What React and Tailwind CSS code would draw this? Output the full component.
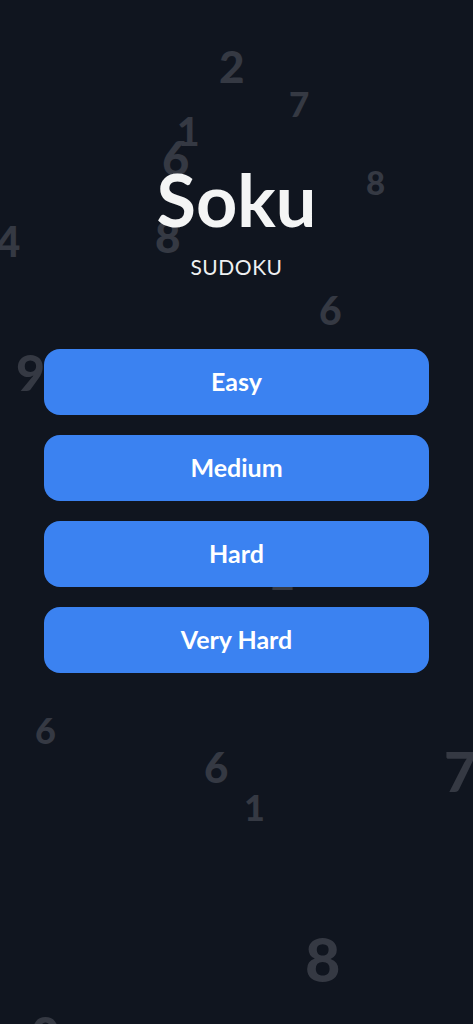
import React from 'react';

// scattered background digits (position is the content here)
const digits = [
  { n: '2', cls: 'left-[219px] top-[44px] text-[44px]' },
  { n: '7', cls: 'left-[289px] top-[86px] text-[35px]' },
  { n: '1', cls: 'left-[177px] top-[112px] text-[39px]' },
  { n: '6', cls: 'left-[162px] top-[135px] text-[47px]' },
  { n: '8', cls: 'left-[366px] top-[166px] text-[33px]' },
  { n: '4', cls: 'left-[-4px] top-[220px] text-[42px]' },
  { n: '8', cls: 'left-[155px] top-[214px] text-[44px]' },
  { n: '6', cls: 'left-[319px] top-[291px] text-[39px]' },
  { n: '9', cls: 'left-[16px] top-[347px] text-[50px]' },
  { n: '2', cls: 'left-[271px] top-[555px] text-[40px]' },
  { n: '6', cls: 'left-[35px] top-[712px] text-[36px]' },
  { n: '6', cls: 'left-[204px] top-[746px] text-[42px]' },
  { n: '1', cls: 'left-[244px] top-[789px] text-[36px]' },
  { n: '7', cls: 'left-[444px] top-[743px] text-[56px]' },
  { n: '8', cls: 'left-[305px] top-[928px] text-[61px]' },
  { n: '0', cls: 'left-[31px] top-[1009px] text-[50px]' },
];

const levels = ['Easy', 'Medium', 'Hard', 'Very Hard'];

export default function App() {
  return (
    <div
      className="relative w-full h-[1024px] overflow-hidden bg-[#10151f]"
      style={{ fontFamily: 'Lato, "Noto Sans", sans-serif' }}
    >
      {digits.map((d, i) => (
        <span
          key={i}
          className={`absolute leading-none font-black text-[#353943] select-none ${d.cls}`}
        >
          {d.n}
        </span>
      ))}

      <div className="relative flex flex-col items-center pt-[163px]">
        <h1 className="text-7xl leading-none font-bold text-[#f4f5f5]">Soku</h1>
        <p className="mt-[18px] text-[21px] leading-7 font-normal text-[#eef0f2] tracking-wide">SUDOKU</p>

        <div className="mt-[68px] w-full px-[44px] flex flex-col gap-5">
          {levels.map((l) => (
            <button
              key={l}
              className="h-[66px] w-full rounded-2xl bg-[#3b82f1] text-white text-[25px] font-bold"
            >
              {l}
            </button>
          ))}
        </div>
      </div>
    </div>
  );
}
